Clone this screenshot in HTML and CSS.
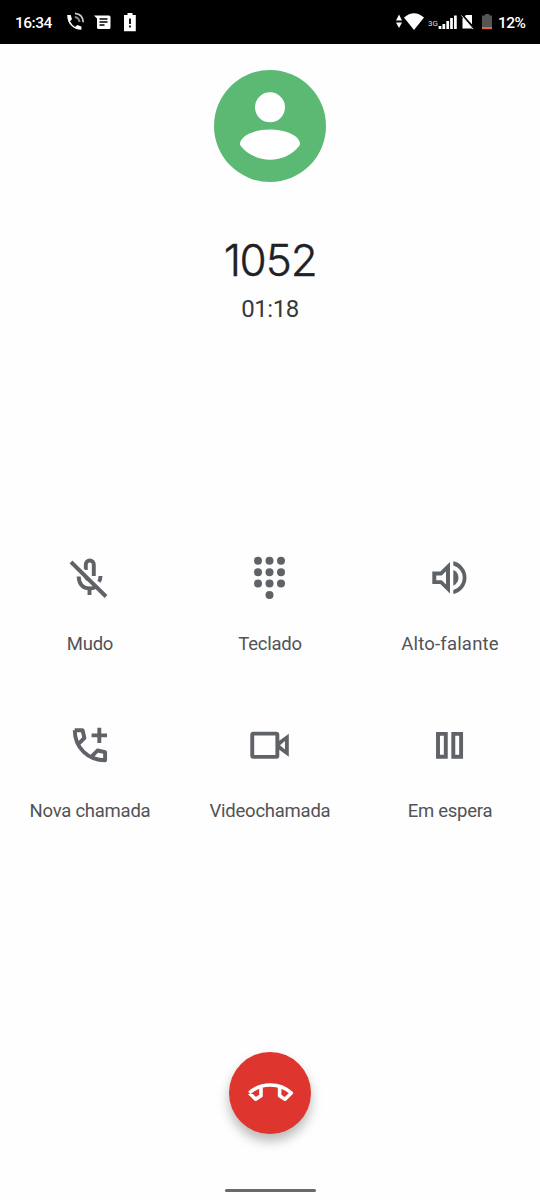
FILE: index.html
```html
<!DOCTYPE html>
<html lang="pt-BR">
<head>
<meta charset="utf-8">
<title>Chamada</title>
<link rel="stylesheet" href="styles.css">
</head>
<body>
<div class="screen">
  <header class="status">
    <div class="status-side">
      <span class="clock">16:34</span>
      <svg class="i-phone" width="20" height="20" viewBox="65 12 20 20">
        <path d="M67.2 15h3.500l1.300 4.200-2 2.100q2 4 5.200 5.700l2-2 4.200 1.500v3.200c-8.500 0-14.200-6-14.200-14.700z" fill="#fff"/>
        <path d="M75 13.300q7.800.7 8.300 9" fill="none" stroke="#ccc" stroke-width="1.700"/>
        <path d="M74.800 17q4 .4 4.800 5" fill="none" stroke="#888" stroke-width="2"/>
      </svg>
      <svg class="i-message" width="18" height="16" viewBox="94 14 18 16">
        <path d="M94 15.500H109q1.500 0 1.500 1.500v10.500q0 1.500-1.500 1.500H98.500q-1.500 0-1.500-1.500V18.500z" fill="#fff"/>
        <path d="M99.500 19h8M99.500 22h8M99.500 25h5" stroke="#000" stroke-width="1.300"/>
      </svg>
      <svg class="i-alert" width="14" height="20" viewBox="123 12 14 20">
        <path d="M127.500 13h5v2h3.300v16.200h-11.800V15h3.500z" fill="#fff"/>
        <path d="M130 18.500v5.500M130 25.500v2" stroke="#000" stroke-width="1.800"/>
      </svg>
    </div>
    <div class="status-side">
      <svg width="28" height="20" viewBox="396 12 28 20">
        <path d="M396 20.500l3-6 3 6zM396 22.500h6l-3 5.500z" fill="#fff"/>
        <path d="M404 17.500q10-8.500 20 0L414 30z" fill="#fff"/>
      </svg>
      <span class="network">3G</span>
      <svg width="19" height="16" viewBox="438 14 19 16">
        <path d="M440 26v3M443.800 24v5M447.700 21v8M451.500 18v11M455.400 15.500v13.500" stroke="#fff" stroke-width="2.700"/>
      </svg>
      <svg class="i-sim" width="14" height="18" viewBox="461 13 14 18">
        <path d="M466 15h6v13.500h-9.500V18.500z" fill="#fff"/>
        <path d="M462.200 14.800l12 13.700" stroke="#000" stroke-width="2"/>
        <path d="M461.500 15.500l11.700 13.700" stroke="#ddd" stroke-width="1"/>
      </svg>
      <svg class="i-battery" width="11" height="18" viewBox="482 13 11 18">
        <path d="M485 14h4.500v1.500h2.500v12h-10v-12h3z" fill="#555"/>
        <path d="M482 27h10v2.200h-10z" fill="#e8653d"/>
      </svg>
      <span class="percent">12%</span>
    </div>
  </header>
  <main class="call">
    <svg class="avatar" width="112" height="112" viewBox="214 70 112 112">
      <circle cx="270" cy="126" r="56" fill="#5cb974"/>
      <circle cx="270" cy="107.300" r="15" fill="#fff"/>
      <path d="M240 143c2-8.500 16-13.500 30-13.500s28 5 30 13.500q.2 1.800-1 3.300c-7 8.500-17.500 13.400-29 13.400s-22-4.900-29-13.400q-1.200-1.500-1-3.300z" fill="#fff"/>
    </svg>
    <h1 class="number">1<span class="zero">0</span><span class="five">5</span>2</h1>
    <div class="timer">01:18</div>
    <div class="actions">
      <button class="action">
        <svg class="icon" viewBox="66 554 48 48">
          <path d="M85.800 570v-5.500a4 4 0 0 1 8 0V576M78.600 576.500c.5 8 4.700 12 11.200 12q4 0 6.500-2M100.500 576q-.1 3.500-1.500 5.800M89.500 588.500v6.500"/>
          <path d="M84 573l8 8q-7.500 1.500-8-5z" fill="#5f6368" stroke="none"/>
          <path d="M73 560l35 34.500" class="gap"/>
          <path d="M71 562l35 34.500"/>
        </svg>
        <span>Mudo</span>
      </button>
      <button class="action">
        <svg class="icon solid" viewBox="246 554 48 48">
          <circle cx="258" cy="560.700" r="4"/><circle cx="269.500" cy="560.700" r="4"/><circle cx="281" cy="560.700" r="4"/>
          <circle cx="258" cy="572.200" r="4"/><circle cx="269.500" cy="572.200" r="4"/><circle cx="281" cy="572.200" r="4"/>
          <circle cx="258" cy="583.600" r="4"/><circle cx="269.500" cy="583.600" r="4"/><circle cx="281" cy="583.600" r="4"/>
          <circle cx="269.500" cy="595" r="4"/>
        </svg>
        <span>Teclado</span>
      </button>
      <button class="action">
        <svg class="icon solid" viewBox="426 554 48 48">
          <path fill-rule="evenodd" d="M432.300 571.500h8l9.700-9.500v31.500l-9.700-9.500h-8zM436.300 575.500v4.700h5.500l4.200 4.200v-13.200l-4.200 4.300z"/>
          <path d="M453.300 570q5.200 2.300 5.200 7.800t-5.200 7.900z"/>
          <path d="M453.300 561.300a16.800 16.800 0 0 1 0 32.800v-4.200a12.600 12.600 0 0 0 0-24.400z"/>
        </svg>
        <span class="wide">Alto-falante</span>
      </button>
      <button class="action">
        <svg class="icon" viewBox="66 721 48 48">
          <path d="M74.700 730.200H82.600L84.400 738 79 743.300M74.700 730.200C75 748 88 760.200 105.100 760.300V752.200L97.500 750.500 91.800 756.300M99.300 727.700v15.400M91.600 735.400h15.400" stroke-linejoin="round"/>
        </svg>
        <span>Nova chamada</span>
      </button>
      <button class="action">
        <svg class="icon solid" viewBox="246 721 48 48">
          <path fill-rule="evenodd" d="M253.300 731.700h23q3 0 3 3v6l9.500-7v23l-9.500-7v6q0 3-3 3h-23q-3 0-3-3v-21q0-3 3-3zM254.200 735.500v19.400h21.200v-19.400zM280 745.200l5 4.300v-8.600z"/>
        </svg>
        <span>Videochamada</span>
      </button>
      <button class="action">
        <svg class="icon" viewBox="426 721 48 48">
          <path d="M438 733.900h7.800v22.900H438zM453.300 733.900h7.800v22.900h-7.800z"/>
        </svg>
        <span>Em espera</span>
      </button>
    </div>
    <button class="hangup" aria-label="Encerrar">
      <svg width="82" height="82" viewBox="229 1052 82 82">
        <path d="M249.300 1093Q258 1085 270.300 1085T291.300 1093L285 1099.200 279.600 1095.800V1086.500M249.300 1093L255.600 1099.200 261 1095.800V1086.500" fill="none" stroke="#fff" stroke-width="3.600" stroke-linejoin="round"/>
      </svg>
    </button>
    <div class="home-bar"></div>
  </main>
</div>
</body>
</html>
```
FILE: styles.css
```css
* { box-sizing: border-box; }
body { margin: 0; background: #fefefe; font-family: Roboto, "Liberation Sans", sans-serif; }
svg { display: block; flex: none; }
.screen { width: 540px; height: 1200px; display: flex; flex-direction: column; overflow: hidden; }
.status { height: 44px; flex: none; background: #000; color: #fff; display: flex; justify-content: space-between; padding: 0 15px; }
.status-side { display: flex; align-items: center; }
.clock, .percent { font-size: 15.500px; font-weight: 500; line-height: 20px; letter-spacing: -.5px; padding-top: 1px; }
.clock { width: 50px; }
.i-message { margin-left: 9px; }
.i-alert { margin-left: 11px; }
.network { width: 10px; margin: 2px 0 0 4px; font-size: 8px; color: #ddd; }
.i-sim { margin-left: 4px; }
.i-battery { margin: 0 5px 0 7px; }
.percent { width: 27px; white-space: nowrap; }
.call { flex: 1; display: flex; flex-direction: column; align-items: center; padding-top: 26px; }
.number { margin: 52px 0 0; height: 52px; font: 300 44px/52px Inter, sans-serif; letter-spacing: -1.500px; color: #202124; -webkit-text-stroke: .4px #202124; }
.zero { letter-spacing: -1px; }
.five { letter-spacing: -1px; }
.timer { margin-top: 9px; height: 29px; font-size: 24px; line-height: 28px; letter-spacing: -.5px; color: #38393b; }
.actions { width: 100%; margin-top: 230px; display: grid; grid-template-columns: repeat(3, 1fr); grid-auto-rows: 167px; }
.action { border: 0; padding: 0; background: none; display: flex; flex-direction: column; align-items: center; gap: 30px; font: 400 18.500px/24px Roboto, sans-serif; letter-spacing: -.25px; color: #515356; white-space: nowrap; }
.action .wide { letter-spacing: .2px; }
.icon { width: 48px; height: 48px; fill: none; stroke: #5f6368; stroke-width: 3.900; }
.icon .gap { stroke: #fefefe; stroke-width: 3; }
.solid { fill: #5f6368; stroke: none; }
.hangup { width: 82px; height: 82px; margin-top: 164px; padding: 0; border: 0; border-radius: 50%; background: #de352e; box-shadow: 0 7px 12px rgba(0, 0, 0, .28); }
.home-bar { width: 91px; height: 3px; margin-top: 55px; border-radius: 2px; background: #696969; }
```
